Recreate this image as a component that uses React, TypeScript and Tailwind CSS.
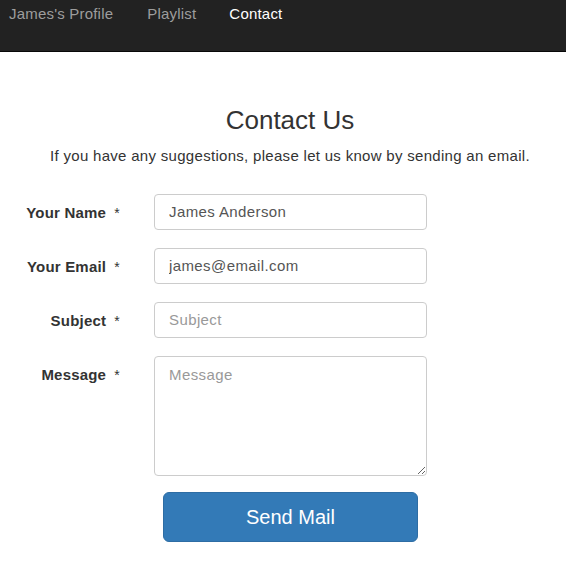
import React from 'react';

const fields = [
  { label: 'Your Name', value: 'James Anderson', placeholder: 'Name' },
  { label: 'Your Email', value: 'james@email.com', placeholder: 'Email' },
  { label: 'Subject', value: '', placeholder: 'Subject' },
];

export default function App() {
  return (
    <div className="min-h-screen bg-white text-[#333] font-['Liberation_Sans',Arial,sans-serif] text-[14px]">
      <nav className="h-[52px] bg-[#222] border-b border-[#080808]">
        <ul className="flex items-start pt-[3px] pl-[9px] text-[15px] tracking-[0.2px]">
          <li className="text-[#9d9d9d] mr-[34px]">James's Profile</li>
          <li className="text-[#9d9d9d] mr-[33px]">Playlist</li>
          <li className="text-white">Contact</li>
        </ul>
      </nav>

      <div className="text-center pt-[53px] pl-[14px]">
        <h1 className="text-[26px] leading-[30px]">Contact Us</h1>
        <p className="mt-[10px] text-[15px] tracking-[0.3px]">If you have any suggestions, please let us know by sending an email.</p>
      </div>

      <form className="mt-[26px] flex flex-col gap-[18px]">
        {fields.map((f) => (
          <div key={f.label} className="flex items-start">
            <label className="w-[122px] text-right font-bold text-[15px] tracking-[0.2px] pt-[8px] pr-[2px] whitespace-pre">
              {f.label}<span className="font-normal text-[14px]">  *</span>
            </label>
            <input
              className="ml-[32px] w-[273px] h-[36px] border border-[#ccc] rounded-[4px] px-[14px] text-[15px] tracking-[0.4px] text-[#555] placeholder:text-[#999] outline-none"
              defaultValue={f.value}
              placeholder={f.placeholder}
            />
          </div>
        ))}
        <div className="flex items-start">
          <label className="w-[122px] text-right font-bold text-[15px] tracking-[0.2px] pt-[8px] pr-[2px] whitespace-pre">
            Message<span className="font-normal text-[14px]">  *</span>
          </label>
          <textarea
            className="ml-[32px] w-[273px] h-[120px] border border-[#ccc] rounded-[4px] px-[14px] py-[7px] text-[15px] tracking-[0.4px] text-[#555] placeholder:text-[#999] outline-none"
            placeholder="Message"
          />
        </div>
      </form>

      <div className="mt-[16px] pl-[163px]">
        <button className="w-[255px] h-[50px] bg-[#337ab7] border border-[#2e6da4] rounded-[6px] text-white text-[20px]">
          Send Mail
        </button>
      </div>
    </div>
  );
}
